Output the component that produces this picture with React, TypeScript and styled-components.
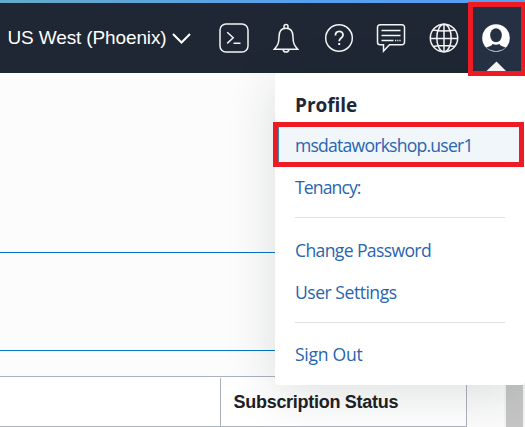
import React from "react";
import styled, { createGlobalStyle } from "styled-components";

const GlobalStyle = createGlobalStyle`
  * { box-sizing: border-box; }
  body { margin: 0; overflow: hidden; }
`;

const Screen = styled.div`
  position: relative;
  width: 525px;
  height: 427px;
  overflow: hidden;
  background: #fcfcfc;
  font-family: "Liberation Sans", Arial, sans-serif;
`;

const TopBar = styled.header`
  display: flex;
  align-items: center;
  height: 73px;
  padding: 3px 0 0 7.5px;
  background: linear-gradient(90deg, #65abc8, #569fef 60%, #569ff5) top / 100% 3px no-repeat, #1e2733;
`;

const Region = styled.div`
  display: flex;
  align-items: center;
  width: 211.5px;
  gap: 5px;
  color: #fff;
  font-size: 19px;
  white-space: nowrap;
`;

const RegionName = styled.span`
  letter-spacing: -0.13px;
`;

const IconRow = styled.nav`
  display: flex;
  gap: 22.4px;
  svg { display: block; flex: none; }
`;

const IconSvg = styled.svg`
  width: 30px;
  height: 30px;
  fill: none;
  stroke: #f3f5f6;
  stroke-width: 1.5;
`;

const AvatarCell = styled.div`
  position: absolute;
  left: 468px;
  top: 2px;
  z-index: 3;
  width: 57px;
  height: 74px;
  border: 5px solid #ed1c24;
  border-right-width: 4px;
  background: #253142;
  svg { display: block; }
`;

const Content = styled.main`
  display: flex;
  flex-direction: column;
  height: 354px;
`;

const Banner = styled.section`
  height: 99px;
  margin-top: 179px;
  border: solid #0572ce;
  border-width: 1px 0;
`;

const Table = styled.section`
  display: grid;
  grid-template-columns: 220px 247px;
  width: 467px;
  height: 51px;
  margin-top: 25px;
  padding-top: 1px;
  background: #fff;
  border: solid #acb2bb;
  border-width: 1px 1px 1px 0;
`;

const HeaderCell = styled.div`
  display: flex;
  align-items: center;
  padding-left: 12.5px;
  color: #202124;
  font-size: 18px;
  font-weight: 700;
  letter-spacing: -0.28px;
  & + & { border-left: 1px solid #acb2bb; }
`;

const ScrollTrack = styled.div`
  position: absolute;
  left: 504px;
  top: 73px;
  width: 21px;
  height: 354px;
  background: #c6c6c6;
  border: solid #f5f5f5;
  border-width: 0 2px;
`;

const Menu = styled.aside`
  position: absolute;
  left: 275px;
  top: 73px;
  z-index: 2;
  width: 250px;
  height: 312px;
  background: #fff;
  border-radius: 4px;
  box-shadow: 0 10px 50px rgba(20, 35, 35, 0.14);
  font-family: "Open Sans", "Noto Sans", sans-serif;
`;

const MenuTitle = styled.h2`
  height: 52px;
  margin: 0;
  padding: 13px 20px 0;
  color: #1e2835;
  font-size: 19px;
  line-height: 38px;
  font-weight: 700;
  letter-spacing: -0.05px;
`;

const MenuItem = styled.div<{ $track?: number; $active?: boolean }>`
  height: 42px;
  padding: 0 20px;
  line-height: 41px;
  font-size: 17.6px;
  color: #2865af;
  white-space: nowrap;
  letter-spacing: ${(p) => p.$track ?? -0.3}px;
  background: ${(p) => (p.$active ? "#f1f6fb" : "transparent")};
`;

const Divider = styled.hr`
  height: 1px;
  margin: 8px 20px 12px;
  border: 0;
  background: #e0e0e0;
  & ~ & { margin-bottom: 11px; }
`;

const ItemOutline = styled.div`
  position: absolute;
  left: 273px;
  top: 122px;
  z-index: 3;
  width: 251px;
  height: 45px;
  border: 5px solid #ed1c24;
  box-shadow: inset 1px 0 #398ca9;
`;

export default function App() {
  return (
    <Screen>
      <GlobalStyle />
      <TopBar>
        <Region>
          <RegionName>US West (Phoenix)</RegionName>
          <svg width="19" height="12" viewBox="0 0 19 12" fill="none" stroke="#fff" strokeWidth="2">
            <path d="M1 2l8.5 8.5L18 2" />
          </svg>
        </Region>
        <IconRow>
          <IconSvg viewBox="0 0 30 30">
            <rect x="1" y="1" width="28" height="28" rx="6" />
            <path d="M8.2 9.200l6 5.600-6 5.600M14.500 20.200h7" />
          </IconSvg>
          <IconSvg viewBox="0 0 30 30">
            <path d="M3.3 26.2c3.4-4 4.7-6 4.7-12.2 0-5.4 2.6-8.7 7-8.7s7 3.3 7 8.7c0 6.200 1.300 8.200 4.700 12.200zM13 5.300V3.500a2 2 0 0 1 4 0v1.800M12 26.500c.6 3.300 5.400 3.300 6 0" />
          </IconSvg>
          <IconSvg viewBox="0 0 30 30">
            <circle cx="15" cy="15" r="13.300" />
            <path d="M11.400 12.500c0-5.500 7.600-5.500 7.600-.6 0 3.100-3.800 3.200-3.800 6.400" strokeWidth="1.800" />
            <path d="M15.200 20v2" strokeWidth="2" />
          </IconSvg>
          <IconSvg viewBox="0 0 30 30">
            <path d="M4 1.700h22a2.500 2.500 0 0 1 2.500 2.500v15a2.500 2.500 0 0 1-2.500 2.500H13.500L7.500 28v-6.300H4a2.500 2.500 0 0 1-2.500-2.500v-15A2.500 2.500 0 0 1 4 1.700zM5.500 7.500h19M5.500 12.500h19M5.500 17.500h12" />
            <path d="M19 17.500h6" strokeDasharray="1.200 1" />
          </IconSvg>
          <IconSvg viewBox="0 0 30 30">
            <circle cx="15" cy="15" r="13.700" />
            <ellipse cx="15" cy="15" rx="7.200" ry="13.700" />
            <path d="M15 1.300v27.400M1.300 15.500h27.400M4 7q11 2.200 22 0M4 23.500q11-2.200 22 0" />
          </IconSvg>
        </IconRow>
      </TopBar>

      <Content>
        <Banner />
        <Table>
          <HeaderCell />
          <HeaderCell>Subscription Status</HeaderCell>
        </Table>
      </Content>
      <ScrollTrack />

      <Menu>
        <MenuTitle>Profile</MenuTitle>
        <MenuItem $active $track={-0.78}>msdataworkshop.user1</MenuItem>
        <MenuItem $track={-0.9}>Tenancy:</MenuItem>
        <Divider />
        <MenuItem $track={-0.65}>Change Password</MenuItem>
        <MenuItem $track={-0.5}>User Settings</MenuItem>
        <Divider />
        <MenuItem>Sign Out</MenuItem>
      </Menu>

      <AvatarCell>
        <svg width="48" height="64" viewBox="0 0 48 64">
          <circle cx="23" cy="31" r="13.800" fill="#fff" />
          <ellipse cx="23" cy="28.300" rx="5.800" ry="7" fill="#253142" />
          <path d="M19.500 37q3.500 1.500 7 0l1 1.400 5.500 2.300q-10 7-20 0l5.500-2.300z" fill="#253142" />
          <path d="M13.500 64l10-9.500 9.500 9.500z" fill="#f4f4f4" />
        </svg>
      </AvatarCell>
      <ItemOutline />
    </Screen>
  );
}
